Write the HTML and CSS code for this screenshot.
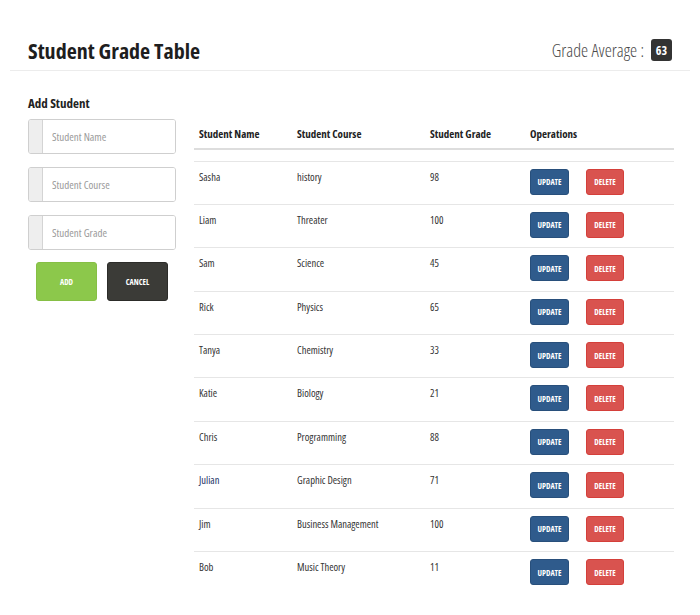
FILE: index.html
```html
<!DOCTYPE html>
<html lang="en">
<head>
<meta charset="utf-8">
<title>Student Grade Table</title>
<link rel="stylesheet" href="styles.css">
</head>
<body>
<div class="page">
  <header class="header">
    <h1 class="title">Student Grade Table</h1>
    <div class="average">Grade Average : <span class="badge">63</span></div>
  </header>
  <main class="main">
    <section class="add-form">
      <h2 class="form-title">Add Student</h2>
      <div class="field"><span class="addon"></span><input class="input" type="text" placeholder="Student Name"></div>
      <div class="field"><span class="addon"></span><input class="input" type="text" placeholder="Student Course"></div>
      <div class="field"><span class="addon"></span><input class="input" type="text" placeholder="Student Grade"></div>
      <div class="form-buttons">
        <button class="btn btn-add">ADD</button>
        <button class="btn btn-cancel">CANCEL</button>
      </div>
    </section>
    <section class="table-wrap">
      <table class="grades">
        <colgroup>
          <col class="c-name"><col class="c-course"><col class="c-grade"><col class="c-ops">
        </colgroup>
        <thead>
          <tr><th>Student Name</th><th>Student Course</th><th>Student Grade</th><th>Operations</th></tr>
        </thead>
        <tbody>
          <tr class="spacer"><td colspan="4"></td></tr>
          <tr><td>Sasha</td><td>history</td><td>98</td><td><button class="op op-update">UPDATE</button><button class="op op-delete">DELETE</button></td></tr>
          <tr><td>Liam</td><td>Threater</td><td>100</td><td><button class="op op-update">UPDATE</button><button class="op op-delete">DELETE</button></td></tr>
          <tr><td>Sam</td><td>Science</td><td>45</td><td><button class="op op-update">UPDATE</button><button class="op op-delete">DELETE</button></td></tr>
          <tr><td>Rick</td><td>Physics</td><td>65</td><td><button class="op op-update">UPDATE</button><button class="op op-delete">DELETE</button></td></tr>
          <tr><td>Tanya</td><td>Chemistry</td><td>33</td><td><button class="op op-update">UPDATE</button><button class="op op-delete">DELETE</button></td></tr>
          <tr><td>Katie</td><td>Biology</td><td>21</td><td><button class="op op-update">UPDATE</button><button class="op op-delete">DELETE</button></td></tr>
          <tr><td>Chris</td><td>Programming</td><td>88</td><td><button class="op op-update">UPDATE</button><button class="op op-delete">DELETE</button></td></tr>
          <tr><td class="name-link">Julian</td><td>Graphic Design</td><td>71</td><td><button class="op op-update">UPDATE</button><button class="op op-delete">DELETE</button></td></tr>
          <tr><td>Jim</td><td>Business Management</td><td>100</td><td><button class="op op-update">UPDATE</button><button class="op op-delete">DELETE</button></td></tr>
          <tr><td>Bob</td><td>Music Theory</td><td>11</td><td><button class="op op-update">UPDATE</button><button class="op op-delete">DELETE</button></td></tr>
        </tbody>
      </table>
    </section>
  </main>
</div>
</body>
</html>
```
FILE: styles.css
```css
* { box-sizing: border-box; }

body {
  margin: 0;
  background: #fff;
  color: #222;
  font-family: "Open Sans", "Liberation Sans", Arial, sans-serif;
  font-stretch: 75%;
}

.page {
  padding: 0 10px;
}

.header {
  display: flex;
  justify-content: space-between;
  align-items: center;
  padding: 38px 18px 8px;
  border-bottom: 1px solid #ececec;
}

.title {
  margin: 0;
  font-size: 22px;
  line-height: 24px;
  font-weight: 700;
  color: #1e1e1e;
}

.average {
  display: flex;
  align-items: center;
  gap: 7px;
  font-size: 18px;
  font-weight: 300;
  color: #4a4a4a;
}

.badge {
  display: inline-flex;
  align-items: center;
  justify-content: center;
  width: 21px;
  height: 22px;
  border-radius: 3px;
  background: #333;
  color: #fff;
  font-size: 12px;
  font-weight: 700;
}

.main {
  display: flex;
  align-items: flex-start;
  padding: 24px 0 0 18px;
  gap: 18px;
}

.add-form {
  width: 148px;
  flex: none;
}

.form-title {
  margin: 0 0 8px;
  font-size: 13px;
  line-height: 16px;
  font-weight: 700;
  color: #222;
}

.field {
  display: flex;
  height: 35px;
  margin-bottom: 13px;
  border: 1px solid #cfcfcf;
  border-radius: 3px;
  overflow: hidden;
}

.addon {
  width: 14px;
  flex: none;
  background: #eee;
  border-right: 1px solid #d4d4d4;
}

.input {
  flex: 1;
  min-width: 0;
  border: 0;
  padding: 0 0 1px 9px;
  font-family: inherit;
  font-stretch: inherit;
  font-size: 11px;
  color: #333;
  outline: none;
}

.input::placeholder {
  color: #9a9a9a;
}

.form-buttons {
  display: flex;
  justify-content: center;
  gap: 10px;
  margin-top: -1px;
}

.btn {
  width: 61px;
  height: 39px;
  border-radius: 3px;
  font-family: inherit;
  font-stretch: inherit;
  font-size: 8px;
  font-weight: 700;
  color: #fff;
  cursor: pointer;
}

.btn-add {
  background: #8cc84b;
  border: 1px solid #86bf45;
}

.btn-cancel {
  background: #3b3b37;
  border: 1px solid #2c2c29;
}

.table-wrap {
  width: 480px;
  flex: none;
  padding-top: 24px;
}

.grades {
  width: 480px;
  border-collapse: collapse;
  table-layout: fixed;
}

.c-name { width: 98px; }
.c-course { width: 133px; }
.c-grade { width: 100px; }
.c-ops { width: 149px; }

.grades th {
  text-align: left;
  padding: 7px 5px 6px;
  font-size: 11px;
  line-height: 16px;
  font-weight: 700;
  color: #222;
  border-bottom: 2px solid #ddd;
}

.grades td {
  padding: 7px 5px 9px;
  font-size: 10.5px;
  line-height: 16px;
  color: #333;
  vertical-align: top;
  border-top: 1px solid #e6e6e6;
}

.grades tbody tr {
  height: 43.4px;
}

.grades tbody .spacer {
  height: 12px;
}

.grades .spacer td {
  padding: 0;
  border-top: 0;
}

.grades td.name-link {
  color: #223163;
}

.op {
  height: 26px;
  border-radius: 3px;
  font-family: inherit;
  font-stretch: inherit;
  font-size: 8px;
  font-weight: 700;
  color: #fff;
  padding: 0;
  cursor: pointer;
  vertical-align: top;
}

.op-update {
  width: 39px;
  background: #2f5b8c;
  border: 1px solid #284f7b;
  margin-right: 17px;
}

.op-delete {
  width: 38px;
  background: #d9534f;
  border: 1px solid #d43f3a;
}
```
